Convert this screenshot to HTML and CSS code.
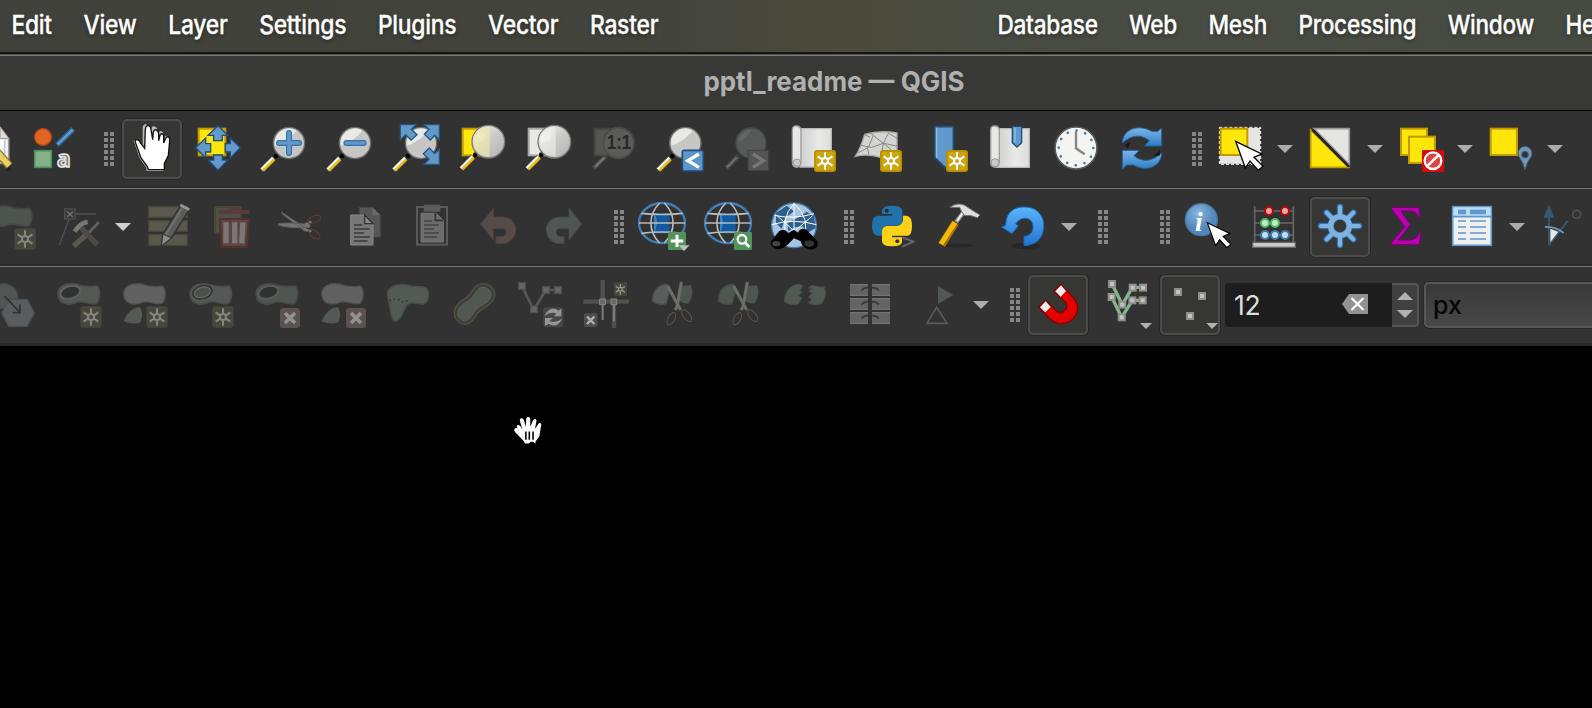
FILE: index.html
```html
<!DOCTYPE html>
<html lang="en">
<head>
<meta charset="utf-8">
<title>pptl_readme — QGIS</title>
<link rel="stylesheet" href="styles.css">
</head>
<body>
<svg class="defs" width="0" height="0" aria-hidden="true">
<defs>
<linearGradient id="glass" x1="0" y1="0" x2="1" y2="1"><stop offset="0" stop-color="#f4f4f3"/><stop offset=".5" stop-color="#cbcbca"/><stop offset="1" stop-color="#b2b2b1"/></linearGradient>
<linearGradient id="paper"><stop offset="0" stop-color="#cfcfcf"/><stop offset=".6" stop-color="#e9e9e8"/><stop offset="1" stop-color="#dddddc"/></linearGradient>
<linearGradient id="blue" x1="0" y1="0" x2="0" y2="1"><stop offset="0" stop-color="#7fb4e4"/><stop offset="1" stop-color="#2b7fc6"/></linearGradient>
<linearGradient id="undoBlue" x1="0" y1="0" x2="0" y2="1"><stop offset="0" stop-color="#5bb5fb"/><stop offset="1" stop-color="#2273d2"/></linearGradient>
<radialGradient id="info" cx=".4" cy=".3"><stop offset="0" stop-color="#8bb8de"/><stop offset="1" stop-color="#5187bb"/></radialGradient>
<g id="handle"><path d="M-46 46L-82 82" stroke="#4a4a48" stroke-width="18"/><path d="M-47 45L-82 80" stroke="#fff" stroke-width="10"/><path d="M-44 49L-78 83" stroke="#eebb12" stroke-width="8"/><circle cx="-39" cy="39" r="7" fill="#000"/></g>
<g id="lens"><use href="#handle"/><circle r="47" fill="#c6c6c5" stroke="#6a6a68" stroke-width="4"/><path d="M-42 8A43 43 0 0 1 22-37C2-14-18 0-42 8Z" fill="#eeeeed" opacity=".85"/></g>
<g id="bigLens"><use href="#handle"/><circle r="49" fill="url(#glass)" stroke="#777775" stroke-width="4"/><ellipse cx="-14" cy="-25" rx="18" ry="12" transform="rotate(-35)" fill="#fff" opacity=".45"/></g>
<g id="rays" fill="none" stroke-width="6"><circle r="9"/><path d="M0-10V-26M0 10V26M-9-5L-22-14M9-5L22-14M-9 5L-22 14M9 5L22 14"/></g>
<g id="badge"><rect x="-33" y="-33" width="66" height="66" rx="9" fill="#b78f00"/><rect x="-28" y="-28" width="56" height="56" rx="5" fill="#cda510"/><use href="#rays" stroke="#fff"/></g>
<g id="badgeOff"><rect x="-32" y="-32" width="64" height="64" rx="9" fill="#47473c"/><use href="#rays" stroke="#858580"/></g>
<g id="crossOff"><rect x="-30" y="-30" width="60" height="60" rx="9" fill="#5a5151"/><path d="M-15-15L15 15M15-15L-15 15" stroke="#929090" stroke-width="11"/></g>
<path id="blob" d="M1 38C-4 10 22-2 52 2C77 11 93 12 116 8C128 16 127 48 115 60C94 65 80 52 58 56C38 66 6 66 1 38Z"/>
<g id="scissorsUp" fill="none"><path d="M10 0L-3 75L-9 84M-31 12L8 84" stroke="#6b6e6b" stroke-width="9"/><ellipse cx="-20" cy="110" rx="10" ry="20" transform="rotate(28 -20 110)" stroke="#64504d" stroke-width="3"/><ellipse cx="26" cy="101" rx="10" ry="21" transform="rotate(-38 26 101)" stroke="#64504d" stroke-width="3"/></g>
<path id="cursor" d="M0 0L78 38L55 48L82 75L68 87L43 59L29 80Z" fill="#fff" stroke="#000" stroke-width="4"/>
<g id="globe"><g fill="none" stroke="#b8babb" stroke-width="5"><rect x="-23" y="-29" width="46" height="60" fill="#125a9d" stroke="none"/><path d="M-24-30V30C-12 5-12-10-24-30Z" fill="#2e87cf" stroke="none"/><ellipse rx="69" ry="60" stroke="#3f7fb9" stroke-width="7"/><path d="M-7-60C-42-25-42 25-7 60M7-60C42-25 42 25 7 60M-62-29Q0-22 62-29M-69 0H69M-62 31Q0 23 62 31"/></g></g>
<g id="node"><rect x="-12" y="-12" width="24" height="24" fill="#8e8e8c"/><rect x="-6" y="-6" width="12" height="12" fill="#c2c2c0"/></g>
</defs>
</svg>

<header class="menubar">
<nav class="menu menu-left"><span>Edit</span><span>View</span><span>Layer</span><span>Settings</span><span>Plugins</span><span>Vector</span><span>Raster</span></nav>
<nav class="menu menu-right"><span>Database</span><span>Web</span><span>Mesh</span><span>Processing</span><span>Window</span><span>Help</span></nav>
</header>
<div class="wallpaper"></div>
<div class="titlebar"><h1>pptl_readme — QGIS</h1></div>

<main>
<section class="toolbar first">
<div class="tool"><svg viewBox="-108 51 144 144"><path d="M-40 58H0L26 92V166H-40Z" fill="#fff" stroke="#9c9c9a" stroke-width="5"/><path d="M0 58V92H26" fill="#ddd" stroke="#9c9c9a" stroke-width="4"/><path d="M14 96V160" stroke="#a9cdea" stroke-width="5"/><path d="M-15 125L28 173" stroke="#8d7a30" stroke-width="25"/><path d="M-15 125L28 173" stroke="#e9ce62" stroke-width="17"/><path d="M18 187L32 188L31 173Z" fill="#222"/></svg></div>
<div class="tool"><svg viewBox="90 51 144 144"><circle cx="129" cy="87" r="25" fill="#df6322" stroke="#b94e18" stroke-width="4"/><path d="M171 111L220 63" stroke="#2e6392" stroke-width="16"/><path d="M173 109L218 65" stroke="#5d9bd1" stroke-width="8"/><rect x="104" y="128" width="50" height="50" fill="#84b18a" stroke="#4b915a" stroke-width="5"/><text x="171" y="178" class="letter">a</text></svg></div>
<div class="grip"><i></i></div>
<div class="tool on"><svg viewBox="384 51 144 144"><path d="M403 104C397 96 408 93 414 101L427 121L428 117V59C428 45 444 45 446 59L452 98L453 64C454 50 471 53 472 66L473 100L476 76C479 65 489 68 490 79V107L494 87C500 79 508 85 506 96L502 143L490 165L490 189H440L438 178L419 151Z" fill="#b9b9b7"/><path d="M405 100C408 90 419 97 422 105L434 121L436 64C438 48 451 50 453 64L458 95L460 72C463 61 475 64 476 78V98L480 82C484 73 492 77 491 87V105L497 91C503 82 511 88 509 98L505 143L493 166V185H445L442 176L423 150Z" fill="#fff" stroke="#111" stroke-width="4"/></svg></div>
<div class="tool"><svg viewBox="582 51 144 144"><rect x="596" y="62" width="80" height="80" fill="#ffe60a" stroke="#c19900" stroke-width="6"/><g fill="#6399cb" stroke="#1f4e7b" stroke-width="4"><path d="M654 53L684 82H667V98H641V82H624Z"/><path d="M654 187L684 156H667V141H641V156H624Z"/><path d="M587 119L617 90V107H632V132H617V150Z"/><path d="M721 119L691 90V107H676V132H691V150Z"/></g></svg></div>
<div class="tool"><svg viewBox="780 51 144 144"><use href="#lens" x="867" y="105"/><path d="M867 75V135M837 105H897" stroke="#3373aa" stroke-width="18" stroke-linecap="round"/><path d="M867 75V135M837 105H897" stroke="#6299ca" stroke-width="11" stroke-linecap="round"/></svg></div>
<div class="tool"><svg viewBox="978 51 144 144"><use href="#lens" x="1065" y="105"/><path d="M1039 105H1091" stroke="#3373aa" stroke-width="18" stroke-linecap="round"/><path d="M1039 105H1091" stroke="#6299ca" stroke-width="11" stroke-linecap="round"/></svg></div>
<div class="tool"><svg viewBox="-24 51 144 144"><use href="#lens" x="63" y="105"/><g fill="#6399c9" stroke="#245883" stroke-width="4"><path d="M118 50V96L104 82L91 96L73 78L87 64L72 50Z"/><path d="M1 50H48L34 64L51 80L33 96L17 80L1 96Z"/><path d="M118 169V123L104 137L88 120L70 137L87 154L72 169Z"/></g></svg></div>
<div class="tool"><svg viewBox="174 51 144 144"><rect x="188" y="62" width="60" height="80" fill="#ffe60a" stroke="#c19900" stroke-width="6"/><use href="#bigLens" x="265" y="101"/><path d="M220 100A45 45 0 0 1 269 57V145A45 45 0 0 1 220 100Z" fill="#f0e9a8" opacity=".65"/></svg></div>
<div class="tool"><svg viewBox="372 51 144 144"><rect x="386" y="62" width="60" height="80" fill="#e8e8e7" stroke="#aaa" stroke-width="6"/><use href="#bigLens" x="463" y="101"/><path d="M418 100A45 45 0 0 1 467 57V145A45 45 0 0 1 418 100Z" fill="#f5f5f3" opacity=".5"/></svg></div>
<div class="tool"><svg viewBox="570 51 144 144"><rect x="584" y="62" width="50" height="80" fill="#555554" stroke="#454544" stroke-width="6"/><path d="M618 144L581 181" stroke="#4b4b4a" stroke-width="13"/><path d="M613 149L585 177" stroke="#777774" stroke-width="6"/><circle cx="656" cy="105" r="46" fill="#5b5b5a" stroke="#4a4a49" stroke-width="5"/><text x="620" y="124" textLength="74" lengthAdjust="spacingAndGlyphs" class="ratio">1:1</text></svg></div>
<div class="tool"><svg viewBox="768 51 144 144"><use href="#lens" x="856" y="105"/><rect x="847" y="127" width="63" height="62" rx="5" fill="#5d96ca" stroke="#214d78" stroke-width="5"/><path d="M897 138L864 158L897 178" class="chev" stroke="#fff"/></svg></div>
<div class="tool"><svg viewBox="966 51 144 144"><path d="M1015 144L978 181" stroke="#484846" stroke-width="14"/><path d="M1010 149L981 178" stroke="#73736e" stroke-width="6"/><circle cx="1053" cy="105" r="45" fill="#575959" stroke="#484a49" stroke-width="4"/><path d="M1013 105Q1018 70 1055 64Q1043 90 1013 105Z" fill="#646666"/><rect x="1044" y="127" width="62" height="61" rx="4" fill="#545454" stroke="#414141" stroke-width="3"/><path d="M1059 138L1090 158L1059 178" class="chev" stroke="#777"/></svg></div>
<div class="tool"><svg viewBox="-36 51 144 144"><path d="M0 62H94V177H0Z" fill="url(#paper)" stroke="#b7b7b5" stroke-width="4"/><path d="M-23 63Q-20 51-8 54Q2 56 3 67V160Q2 177-9 178Q-23 178-23 163Z" fill="#e7e7e6" stroke="#9c9c9a" stroke-width="4"/><circle cx="-9" cy="164" r="11" fill="#c9c9c8" stroke="#999" stroke-width="3"/><use href="#badge" x="75" y="159"/></svg></div>
<div class="tool"><svg viewBox="162 51 144 144"><path d="M194 79Q240 66 291 75V158L245 149Q205 136 166 145Q180 125 194 79Z" fill="#d4d4d2" stroke="#aaa9a7" stroke-width="4"/><path d="M182 112L215 118L250 106L291 114M173 135L205 118L220 82L250 106L265 76L292 91M202 118L207 141M250 108L242 148M210 88L194 80M250 105L274 126L270 153M221 82L207 73" fill="none" stroke="#888886" stroke-width="3"/><use href="#badge" x="273" y="159"/></svg></div>
<div class="tool"><svg viewBox="360 51 144 144"><path d="M404 56H460V178H435L404 148Z" fill="#6099cb" stroke="#244e73" stroke-width="5"/><path d="M410 59V150" stroke="#8dbadd" stroke-width="4"/><use href="#badge" x="471" y="159"/></svg></div>
<div class="tool"><svg viewBox="558 51 144 144"><path d="M588 62H688V178H588Z" fill="url(#paper)" stroke="#b7b7b5" stroke-width="4"/><path d="M572 63Q574 52 587 54Q598 56 598 67V160Q596 177 586 178Q572 178 572 163Z" fill="#e7e7e6" stroke="#9c9c9a" stroke-width="4"/><circle cx="585" cy="164" r="12" fill="#c9c9c8" stroke="#999" stroke-width="3"/><path d="M637 55H665V104L651 117L637 104Z" fill="#5d98cc" stroke="#214e75" stroke-width="4"/><path d="M645 59V103" stroke="#94bddd" stroke-width="4"/></svg></div>
<div class="tool"><svg viewBox="756 51 144 144"><circle cx="828" cy="120" r="63" fill="#f4f4f3" stroke="#585858" stroke-width="5"/><circle cx="828" cy="120" r="52" fill="none" stroke="#4779a5" stroke-width="8" stroke-linecap="round" stroke-dasharray="0.1 27.127"/><path d="M828 72V121L854 139" fill="none" stroke="#858582" stroke-width="7"/></svg></div>
<div class="tool"><svg viewBox="954 51 144 144"><path d="M967 105C967 67 1010 45 1056 70L1073 70L1085 60V114H1034L1048 98C1020 76 993 83 967 105Z" fill="url(#blue)" stroke="#245e9a" stroke-width="3"/><path d="M1085 135C1085 173 1042 195 1000 171L981 171L967 183V127H1018L1002 143C1030 166 1059 158 1085 135Z" fill="url(#blue)" stroke="#245e9a" stroke-width="3"/><path d="M973 111L991 102L984 121ZM1060 145L1080 125V142Z" fill="#17191b"/></svg></div>
<div class="grip"><i></i></div>
<div class="tool"><svg viewBox="72 51 144 144"><rect x="82" y="58" width="124" height="111" fill="#e5e5e4" stroke="#2a2a2a" stroke-width="3"/><rect x="82" y="58" width="124" height="111" fill="none" stroke="#fff" stroke-width="3" stroke-dasharray="9 6"/><rect x="86" y="62" width="80" height="79" fill="#ffe60a" stroke="#c19900" stroke-width="6"/><use href="#cursor" x="131" y="100"/></svg></div>
<div class="drop"></div>
<div class="tool"><svg viewBox="342 51 144 144"><path d="M366 62H472V170Z" fill="#e5e5e4" stroke="#999" stroke-width="5"/><path d="M356 66L470 178H356Z" fill="#ffe60a" stroke="#c19900" stroke-width="5"/><path d="M361 65L471 176" stroke="#222" stroke-width="8"/></svg></div>
<div class="drop"></div>
<div class="tool"><svg viewBox="612 51 144 144"><g fill="#ffe60a" stroke="#c19900" stroke-width="6"><rect x="627" y="62" width="78" height="79"/><rect x="651" y="86" width="78" height="79"/></g><rect x="690" y="126" width="66" height="66" rx="4" fill="#d40b0b"/><circle cx="723" cy="158" r="25" fill="#dd4444" stroke="#fff" stroke-width="7"/><path d="M704 176L742 139" stroke="#fff" stroke-width="8"/></svg></div>
<div class="drop"></div>
<div class="tool"><svg viewBox="882 51 144 144"><rect x="896" y="62" width="79" height="79" fill="#ffe60a" stroke="#c19900" stroke-width="6"/><path d="M999 186Q993 162 984 151A21 21 0 1 1 1014 151Q1005 162 999 186Z" fill="#7396b3" stroke="#3c5e7b" stroke-width="3"/><circle cx="999" cy="140" r="10" fill="#333" stroke="#3c5e7b" stroke-width="3"/></svg></div>
<div class="drop"></div>
</section>

<section class="toolbar second">
<div class="tool"><svg viewBox="-36 285 144 144"><use href="#blob" x="-29" y="293" fill="#4e5550" stroke="#454846" stroke-width="5"/><use href="#badgeOff" x="75" y="393"/></svg></div>
<div class="tool"><svg viewBox="162 285 144 144"><path d="M178 411L207 334M228 318H287" stroke="#505050" stroke-width="4"/><rect x="194" y="303" width="31" height="30" fill="#393939" stroke="#4f4f4f" stroke-width="4"/><path d="M202 311L218 326M218 311L202 326" stroke="#747474" stroke-width="4"/><path d="M221 414L259 380" stroke="#59594a" stroke-width="16"/><path d="M259 382L297 342" stroke="#60605e" stroke-width="8"/><path d="M240 356L292 410" stroke="#514945" stroke-width="16"/><path d="M224 371Q239 345 263 342" fill="none" stroke="#777774" stroke-width="14"/></svg></div>
<div class="drop light"></div>
<div class="tool"><svg viewBox="432 285 144 144"><g fill="#5a594c" stroke="#47473c" stroke-width="4"><rect x="446" y="296" width="116" height="32"/><rect x="446" y="338" width="116" height="32"/><rect x="446" y="380" width="116" height="32"/></g><path d="M484 414L489 378L543 291L568 305L514 390Z" fill="#5c5c5a" stroke="#343434" stroke-width="5"/><path d="M497 381L545 302" stroke="#717170" stroke-width="6"/><path d="M484 414L489 378L514 390Z" fill="#8b8b89" stroke="#343434" stroke-width="3"/><path d="M541 291L568 305" stroke="#969694" stroke-width="8"/></svg></div>
<div class="tool"><svg viewBox="630 285 144 144"><rect x="645" y="297" width="78" height="78" fill="#515047" stroke="#464637" stroke-width="6"/><path d="M660 312H744M687 309Q704 292 720 309" fill="none" stroke="#563c3b" stroke-width="12" stroke-linecap="round"/><path d="M659 333H747L740 417H665Z" fill="#5d4544" stroke="#54302f" stroke-width="6"/><path d="M678 343V406M704 343V406M729 343L725 406" stroke="#7c7776" stroke-width="16"/></svg></div>
<div class="tool"><svg viewBox="828 285 144 144"><path d="M844 312L925 366L914 369L848 319ZM836 347Q870 342 930 350V358Q870 362 836 352Z" fill="#727573" stroke="#60625f" stroke-width="3"/><path d="M915 365L934 370M915 350L934 341" stroke="#777" stroke-width="8"/><g fill="none" stroke="#5e3b3a" stroke-width="3"><ellipse cx="943" cy="334" rx="21" ry="10" transform="rotate(-23 943 334)"/><ellipse cx="943" cy="379" rx="20" ry="10" transform="rotate(37 943 379)"/></g></svg></div>
<div class="tool"><svg viewBox="1026 285 144 144"><path d="M1078 298H1117L1141 322V387H1078Z" fill="#565656" stroke="#484848" stroke-width="3"/><path d="M1117 298V322H1141Z" fill="#696969"/><path d="M1052 321H1094L1119 347V411H1052Z" fill="#777" stroke="#8a8a8a" stroke-width="3"/><path d="M1094 321V347H1119Z" fill="#8b8b8b" stroke="#333" stroke-width="4"/><path d="M1062 351H1087M1062 363H1109M1062 375H1092M1062 387H1109M1062 399H1103" stroke="#3a3a3a" stroke-width="4"/></svg></div>
<div class="tool"><svg viewBox="24 285 144 144"><rect x="51" y="297" width="90" height="113" fill="none" stroke="#5a5a5a" stroke-width="6"/><rect x="71" y="290" width="50" height="21" fill="#5c5c5c"/><path d="M63 316H109L130 337V402H63Z" fill="#6c6c6c" stroke="#777" stroke-width="3"/><path d="M106 316V337H130" fill="none" stroke="#333" stroke-width="5"/><path d="M72 339H97M72 351H117M72 363H102M72 375H117M72 387H112" stroke="#444" stroke-width="4"/></svg></div>
<div class="tool"><svg viewBox="222 285 144 144"><path d="M242 348L280 301V327H301C331 327 347 341 347 365C347 389 327 407 307 407H288V386H303C316 386 321 378 318 368C315 358 300 362 280 362V395Z" fill="#554b49" stroke="#4b4341" stroke-width="3"/></svg></div>
<div class="tool"><svg viewBox="420 285 144 144"><path d="M545 348L507 301V327H487C456 327 439 341 439 365C439 389 459 407 480 407H492V386H484C471 386 466 378 469 368C472 358 487 362 507 362V395Z" fill="#505654" stroke="#474b49" stroke-width="3"/></svg></div>
<div class="grip"><i></i></div>
<div class="tool"><svg viewBox="714 285 144 144"><use href="#globe" x="786" y="345"/><rect x="804" y="372" width="54" height="54" rx="4" fill="#519359"/><path d="M831 380V417M812 399H850" stroke="#fff" stroke-width="9"/><path d="M836 412H869L852 429Z" fill="#bdbdbb"/></svg></div>
<div class="tool"><svg viewBox="912 285 144 144"><use href="#globe" x="984" y="345"/><rect x="1002" y="372" width="54" height="54" rx="4" fill="#519359"/><circle cx="1026" cy="394" r="13" fill="none" stroke="#fff" stroke-width="7"/><path d="M1035 404L1048 417" stroke="#fff" stroke-width="8"/></svg></div>
<div class="tool"><svg viewBox="-90 285 144 144"><circle cx="-18" cy="352" r="67" fill="#a5c5e2" stroke="#4078aa" stroke-width="4"/><path d="M-72 315L-40 293L-18 310L-45 330L-55 362L-72 345ZM-8 330L20 311L42 325L47 360L22 375L8 355L-16 358L-35 370L-38 345Z" fill="#2d5e8d"/><path d="M-77 322Q-20 335 42 317M-85 350Q-20 330 49 350M-18 286Q-62 335-38 400M-18 286Q34 330 10 400M-18 286V385M-70 322L0 385M36 325L-35 385" fill="none" stroke="#fff" stroke-width="3"/><path d="M-88 401L-63 370Q-48 358-35 375L-18 365L-6 374Q2 356 20 365L51 398Q60 420 35 425Q8 423 1 399L-18 391L-35 408Q-52 426-71 423Q-89 418-88 401Z" fill="#000"/><ellipse cx="-71" cy="407" rx="12" ry="8" fill="#444"/><ellipse cx="28" cy="407" rx="15" ry="10" fill="#333"/></svg></div>
<div class="grip"><i></i></div>
<div class="tool"><svg viewBox="204 285 144 144"><path d="M246 322V309Q246 293 277 293Q307 293 307 309V340Q307 352 292 353H263Q247 354 246 373V383H233Q216 380 216 353Q216 325 233 323H276V318H246Z" fill="#2171aa"/><path d="M306 388V402Q305 415 275 415Q246 415 246 400V371Q246 356 262 354H291Q307 352 309 337V323H320Q336 326 336 353Q336 381 323 383H276V388Z" fill="#ffd219"/><circle cx="260" cy="308" r="6" fill="#222d34"/><circle cx="292" cy="400" r="6" fill="#333"/><path d="M307 388L340 401L307 416" fill="none" stroke="#666663" stroke-width="6"/></svg></div>
<div class="tool"><svg viewBox="402 285 144 144"><ellipse cx="475" cy="413" rx="45" ry="6" fill="#282828"/><path d="M425 411L466 344" stroke="#a87200" stroke-width="23"/><path d="M423 408L465 343" stroke="#f4b90b" stroke-width="15"/><path d="M468 343L493 309" stroke="#8f8f8d" stroke-width="13"/><path d="M471 339L493 308" stroke="#eee" stroke-width="6"/><path d="M450 298Q472 282 494 292L520 309L540 321L532 329L513 323L493 322L484 309L479 298Z" fill="#dededd" stroke="#777" stroke-width="3"/></svg></div>
<div class="tool"><svg viewBox="600 285 144 144"><ellipse cx="677" cy="414" rx="45" ry="10" fill="#272727"/><path d="M605 357L617 352C617 310 645 295 678 297C712 298 735 326 731 359C729 391 707 412 672 413V385C694 384 704 365 697 345C690 325 660 326 647 348L655 353L636 377Z" fill="url(#undoBlue)" stroke="#1767b8" stroke-width="3"/></svg></div>
<div class="drop"></div>
<div class="grip"><i></i></div>
<div class="blank"></div>
<div class="grip"><i></i></div>
<div class="tool"><svg viewBox="-24 285 144 144"><circle cx="28" cy="335" r="48" fill="url(#info)" stroke="#4778a4" stroke-width="4"/><text x="9" y="370" class="info">i</text><use href="#cursor" transform="translate(46 344) scale(.86)"/></svg></div>
<div class="tool"><svg viewBox="174 285 144 144"><path d="M188 295V405M304 295V405M188 309H304M188 345H304M188 381H304" stroke="#676767" stroke-width="5"/><rect x="182" y="403" width="128" height="15" fill="#c9c9c7" stroke="#666" stroke-width="4"/><g fill="#f5a5a5" stroke="#b60b0b" stroke-width="6"><circle cx="231" cy="309" r="12"/><circle cx="279" cy="309" r="12"/></g><g fill="#bdedbe" stroke="#57b668" stroke-width="6"><circle cx="219" cy="345" r="12"/><circle cx="249" cy="345" r="12"/></g><g fill="#c3dcf1" stroke="#3f79aa" stroke-width="6"><circle cx="219" cy="381" r="12"/><circle cx="249" cy="381" r="12"/><circle cx="279" cy="381" r="12"/></g></svg></div>
<div class="tool on"><svg viewBox="372 285 144 144"><g fill="none" stroke-linecap="round"><g stroke="#2c75b8" stroke-width="19"><circle cx="444" cy="354" r="28"/><path d="M444 320V297M444 388V411M410 354H387M478 354H501M420 330L404 314M468 330L484 314M420 378L404 394M468 378L484 394"/></g><g stroke="#80b2df" stroke-width="12"><circle cx="444" cy="354" r="28" stroke-width="16"/><path d="M444 320V297M444 388V411M410 354H387M478 354H501M420 330L404 314M468 330L484 314M420 378L404 394M468 378L484 394"/></g></g></svg></div>
<div class="tool"><svg viewBox="570 285 144 144"><path d="M598 298H681L684 329H679Q674 311 658 309H627L655 350L619 396H655Q676 393 680 375H687L682 410H598V405L638 356L599 304Z" fill="#b900b1" stroke="#76006f" stroke-width="3"/></svg></div>
<div class="tool"><svg viewBox="768 285 144 144"><rect x="782" y="296" width="116" height="116" fill="#efefee" stroke="#5d98cb" stroke-width="5"/><rect x="785" y="299" width="110" height="26" fill="#b9ddf6"/><path d="M782 326H898" stroke="#5d98cb" stroke-width="5"/><path d="M798 312H822M834 312H882" stroke="#5d98cb" stroke-width="13"/><path d="M798 339H822M834 339H882M798 357H822M834 357H882M798 375H822M834 375H882M798 393H822M834 393H882" stroke="#5d98cb" stroke-width="5"/></svg></div>
<div class="drop"></div>
<div class="tool"><svg viewBox="1038 285 144 144"><path d="M1071 325V412M1071 412L1127 338" stroke="#385c78" stroke-width="5"/><path d="M1055 329L1071 290L1087 329Z" fill="#365873"/><path d="M1075 362L1099 371L1075 403Z" fill="#e7e7e6"/><path d="M1059 357Q1090 355 1115 375" fill="none" stroke="#6e9abd" stroke-width="5"/><circle cx="1154" cy="319" r="12" fill="none" stroke="#515151" stroke-width="5"/></svg></div>
</section>

<section class="toolbar third">
<div class="tool"><svg viewBox="-36 519 144 144"><path d="M-30 565Q-23 525 16 527Q54 536 53 570Q42 608-12 600Z" fill="#505653" stroke="#464a48" stroke-width="4"/><path d="M28 574H82L103 615L81 655H26L5 615Z" fill="#5a5d5f" stroke="#4d5052" stroke-width="4"/><path d="M13 564L60 613M60 589V614H38" fill="none" stroke="#303030" stroke-width="5"/></svg></div>
<div class="tool"><svg viewBox="162 519 144 144"><use href="#blob" x="174" y="526" fill="#555956" stroke="#4b4e4c" stroke-width="5"/><ellipse cx="211" cy="553" rx="30" ry="18" transform="rotate(-15 211 553)" fill="#303231" stroke="#616161" stroke-width="5"/><use href="#badgeOff" x="273" y="627"/></svg></div>
<div class="tool"><svg viewBox="360 519 144 144"><use href="#blob" x="371" y="526" fill="#606160" stroke="#505150" stroke-width="4"/><path d="M370 639Q391 598 419 597Q432 615 422 641Q404 653 370 639Z" fill="#555956"/><use href="#badgeOff" x="471" y="627"/></svg></div>
<div class="tool"><svg viewBox="558 519 144 144"><use href="#blob" x="570" y="526" fill="#555856" stroke="#4b4d4b" stroke-width="5"/><ellipse cx="607" cy="553" rx="32" ry="21" transform="rotate(-15 607 553)" fill="#303231"/><ellipse cx="607" cy="553" rx="25" ry="15" transform="rotate(-15 607 553)" fill="#4b504d" stroke="#656765" stroke-width="4"/><use href="#badgeOff" x="669" y="627"/></svg></div>
<div class="tool"><svg viewBox="756 519 144 144"><use href="#blob" x="768" y="526" fill="#515552" stroke="#484b49" stroke-width="5"/><ellipse cx="805" cy="553" rx="30" ry="18" transform="rotate(-15 805 553)" fill="#303231" stroke="#5b5c5b" stroke-width="5"/><use href="#crossOff" x="870" y="630"/></svg></div>
<div class="tool"><svg viewBox="954 519 144 144"><use href="#blob" x="965" y="526" fill="#606160" stroke="#505150" stroke-width="4"/><path d="M964 639Q985 598 1013 597Q1026 615 1016 641Q998 653 964 639Z" fill="#555956"/><use href="#crossOff" x="1068" y="630"/></svg></div>
<div class="tool"><svg viewBox="-48 519 144 144"><path d="M-37 565C-43 540-14 525 20 530C43 542 67 530 79 540C90 553 88 584 71 588C51 590 34 578 22 590C9 606 7 635-13 640C-29 640-30 595-37 565Z" fill="#535955" stroke="#484d47" stroke-width="4"/><path d="M-32 578Q-10 570 0 578T30 574" fill="none" stroke="#343734" stroke-width="5" stroke-dasharray="5 8"/></svg></div>
<div class="tool"><svg viewBox="150 519 144 144"><path d="M166 630C155 600 178 581 200 569C217 555 220 530 246 527C271 525 292 548 282 572C269 599 245 596 232 617C213 653 186 661 166 630Z" fill="#3e4139" stroke="#4f5245" stroke-width="4"/><path d="M175 624C168 605 184 590 207 578C226 565 228 542 246 538C263 537 279 552 271 570C261 590 237 589 222 613C206 641 187 647 175 624Z" fill="#515753" stroke="#5f6352" stroke-width="3"/></svg></div>
<div class="tool"><svg viewBox="348 519 144 144"><path d="M367 536L401 606L438 546H475" fill="none" stroke="#575757" stroke-width="8"/><path d="M356 524h20v20h-20zM392 594h20v20h-20zM428 536h20v20h-20zM464 536h20v20h-20z" fill="#666" stroke="#505050" stroke-width="4"/><rect x="430" y="598" width="60" height="60" rx="7" fill="#474747"/><path d="M433 623Q453 590 475 608L484 602V625H461L470 617Q453 609 433 623ZM487 632Q469 663 446 647L435 654V630H459L448 639Q465 647 487 632Z" fill="#969694"/></svg></div>
<div class="tool"><svg viewBox="546 519 144 144"><path d="M608 516V580M550 581H687M642 580V660" stroke="#505050" stroke-width="13"/><path d="M608 580V636M642 580V640" stroke="#7c7c7a" stroke-width="6"/><path d="M599 573h17v17h-17zM633 573h17v17h-17z" fill="#686868" stroke="#888886" stroke-width="3"/><rect x="642" y="523" width="39" height="41" fill="#474739"/><use href="#rays" transform="translate(661 544) scale(.62)" stroke="#9a9a98"/><rect x="552" y="616" width="40" height="41" rx="5" fill="#514d4d"/><path d="M561 626L583 648M583 626L561 648" stroke="#b0b0af" stroke-width="7"/></svg></div>
<div class="tool"><svg viewBox="744 519 144 144"><path d="M757 580Q758 534 799 528Q812 534 807 556L798 587Q775 594 757 580Z" fill="#5b5d5c" stroke="#4b4f4c" stroke-width="4"/><path d="M837 535L872 532Q886 560 865 587Q839 587 835 571Z" fill="#4d5651"/><use href="#scissorsUp" x="834" y="522"/></svg></div>
<div class="tool"><svg viewBox="942 519 144 144"><path d="M955 580Q956 534 997 528Q1010 534 1005 556L996 587Q973 594 955 580Z" fill="#4e5751" stroke="#464c48" stroke-width="4"/><path d="M1035 535L1070 532Q1084 560 1063 587Q1037 587 1033 571Z" fill="#4d5651"/><use href="#scissorsUp" x="1032" y="522"/></svg></div>
<div class="tool"><svg viewBox="-60 519 144 144"><path d="M-47 580Q-45 534-3 528L8 535L-1 548L7 553L-4 563L5 570L-5 588Q-29 594-47 580ZM26 539L35 532Q61 540 73 536Q82 566 65 586Q45 596 25 584L36 575L25 566L37 556L26 548L38 544Z" fill="#515954" stroke="#484f4a" stroke-width="3"/></svg></div>
<div class="tool"><svg viewBox="138 519 144 144"><path d="M150 529h54v34h-54zM216 529h54v34h-54zM150 571h54v34h-54zM216 571h54v34h-54zM150 613h54v34h-54zM216 613h54v34h-54z" fill="#646464"/><path d="M150 530h54M216 530h54M150 562h54M216 562h54M150 572h54M216 572h54M150 604h54M216 604h54M150 614h54M216 614h54M150 646h54M216 646h54" stroke="#787878" stroke-width="3"/><path d="M185 548Q190 539 204 539M216 539Q232 540 236 548M185 590Q190 581 204 581M216 581Q232 582 236 590M185 632Q190 623 204 623M216 623Q232 624 236 632" fill="none" stroke="#383838" stroke-width="5"/></svg></div>
<div class="tool"><svg viewBox="336 519 144 144"><path d="M414 534L460 561L414 588Z" fill="#525655"/><path d="M410 598L441 646H381Z" fill="none" stroke="#5a5a5a" stroke-width="5"/></svg></div>
<div class="drop"></div>
<div class="grip"><i></i></div>
<div class="tool on"><svg viewBox="702 519 144 144"><path d="M783 529L812 560C835 582 842 607 820 632C796 653 767 651 747 629L716 598L737 577L768 608C779 618 793 613 799 601C803 592 800 586 793 580L762 550Z" fill="#e20000" stroke="#850000" stroke-width="4"/><path d="M783 532L798 549L782 566L766 550ZM737 580L752 597L736 613L720 598Z" fill="#eee"/></svg></div>
<div class="tool"><svg viewBox="900 519 144 144"><path d="M936 528L967 590L997 538H1029M935 567L965 628L997 577H1028" fill="none" stroke="#80b78b" stroke-width="10"/><use href="#node" x="936" y="528"/><use href="#node" x="998" y="539"/><use href="#node" x="1029" y="539"/><use href="#node" x="967" y="590"/><use href="#node" x="935" y="567"/><use href="#node" x="997" y="577"/><use href="#node" x="1028" y="577"/><use href="#node" x="965" y="628"/><path d="M1020 645H1056L1038 663Z" fill="#b1b1af"/></svg></div>
<div class="tool on"><svg viewBox="-78 519 144 144"><use href="#node" x="-42" y="552"/><use href="#node" x="30" y="564"/><use href="#node" x="-6" y="624"/><path d="M43 645H78L60 663Z" fill="#b1b1af"/></svg></div>
<div class="spin"><span class="value">12</span><svg class="clear" viewBox="0 0 26 20"><path d="M0 10L7 0H26V20H7Z" fill="#929290"/><path d="M9.500 4L21.500 16M21.500 4L9.500 16" stroke="#fff" stroke-width="2.200"/></svg><span class="steps"><b class="up"></b><b class="down"></b></span></div>
<div class="combo">px</div>
</section>
</main>

<div class="canvas"><svg class="pan" viewBox="0 0 96 96"><path d="M12 38C4 28 15 22 21 32L27 43L19 14C17 4 29 2 32 13L38 33L39 8C41-1 52 0 52 9V33L60 14C65 4 75 8 71 18L67 40L77 25C82 16 91 22 86 33L81 64L69 80V86L60 81H53L47 86H36L28 75L4 50C-4 42 4 34 12 38Z" fill="#fff"/><path d="M38 48V74M49 48V74M61 48V74" stroke="#000" stroke-width="5"/></svg></div>
</body>
</html>
```
FILE: styles.css
```css
* { box-sizing: border-box; }
html, body { margin: 0; height: 100%; overflow: hidden; background: #000; }
body { display: flex; flex-direction: column; font-family: Inter, "Liberation Sans", sans-serif; }
.defs { display: block; flex: none; height: 0; }

.menubar { display: flex; flex: none; height: 52px; background: linear-gradient(90deg, #40413a, #43453d 42%, #4b493b 52%, #484c42 64%, #464a40); overflow: hidden; }
.menu { display: flex; flex: none; align-items: center; gap: 36px; height: 49px; color: #fff; font-size: 26px; font-weight: 500; letter-spacing: -.3px; text-shadow: 0 2px 5px rgba(0, 0, 0, .4); -webkit-text-stroke: .3px #fff; white-space: nowrap; transform-origin: left; }
.menu-left { width: 987px; padding-left: 13px; transform: scaleX(.88); }
.menu-right { padding-left: 12px; transform: scaleX(.87); }
.wallpaper { flex: none; height: 4px; border-top: 2px solid #151614; border-bottom: 1px solid #7b7c78; background: #4e504c; }
.titlebar { display: flex; flex: none; align-items: center; justify-content: center; height: 55px; background: #383836; border-bottom: 1px solid #000; }
.titlebar h1 { margin: 0 0 4px 75px; color: #b0b0ae; font-size: 27px; font-weight: 700; white-space: nowrap; transform: scaleX(.96); }

main { flex: none; background: #323232; }
.toolbar { display: flex; align-items: center; height: 78px; overflow: hidden; background: #323232; }
.first { height: 77px; border-bottom: 1px solid #262626; }
.first > :first-child { margin-left: -42px; }
.second { border-top: 1px solid #7a7a7a; border-bottom: 2px solid #292929; }
.second > :first-child { margin-left: -18px; }
.third { height: 80px; border-top: 1px solid #7a7a7a; border-bottom: 3px solid #292929; }
.third > :first-child { margin-left: -18px; }
.tool { display: flex; flex: none; align-items: center; justify-content: center; width: 60px; height: 60px; margin: 0 3px; border-radius: 5px; }
.tool svg { display: block; flex: none; width: 48px; height: 48px; overflow: visible; }
.on { border: 2px solid #4c4c4c; background: #363635; box-shadow: 0 0 0 1px #272727; }
.grip { flex: none; width: 32px; height: 34px; padding-left: 17px; }
.grip i { display: block; width: 10px; height: 34px; background: repeating-linear-gradient(180deg, transparent 0 4px, #323232 4px 6px), linear-gradient(90deg, #858585 0 4px, transparent 4px 6px, #858585 6px); }
.drop { display: flex; flex: none; justify-content: center; width: 24px; padding-right: 1px; }
.drop::after { content: ""; border: 8px solid transparent; border-top-color: #acacaa; border-bottom: 0; }
.light::after { border-top-color: #d0d0ce; }
.blank { flex: none; width: 30px; }
.letter { font: bold 68px "Noto Sans", sans-serif; fill: #777; stroke: #e5e5e3; stroke-width: 5px; }
.ratio { font: bold 58px "Liberation Sans", sans-serif; fill: #282828; }
.info { font: italic bold 82px "Liberation Serif", serif; fill: #fff; }
.chev { fill: none; stroke-width: 10px; }

.spin { display: flex; flex: none; align-items: center; width: 194px; height: 44px; margin-left: 2px; padding-left: 9px; border-radius: 4px; background: #1d1d1d; }
.value { width: 108px; color: #dededc; font-size: 26.5px; letter-spacing: -.4px; }
.clear { width: 26px; height: 20px; margin-top: -3px; }
.steps { display: flex; flex-direction: column; align-items: center; justify-content: center; gap: 10px; width: 27px; height: 44px; margin-left: auto; border: 2px solid #555; border-left: 0; border-radius: 0 4px 4px 0; background: #404040; }
.up, .down { width: 0; height: 0; border: 8px solid transparent; }
.up { border-top: 0; border-bottom-color: #b1b1af; }
.down { border-bottom: 0; border-top-color: #b1b1af; }
.combo { flex: none; width: 190px; height: 46px; margin-left: 5px; padding-left: 7px; border: 2px solid #575757; border-radius: 5px; box-shadow: 0 0 0 1px #272727; background: linear-gradient(#393939, #484848); color: #070707; font-size: 25px; font-weight: 500; line-height: 43px; }

.canvas { flex: 1; min-height: 0; padding: 70px 0 0 514px; background: #000; }
.pan { display: block; width: 30px; height: 31px; }
```
